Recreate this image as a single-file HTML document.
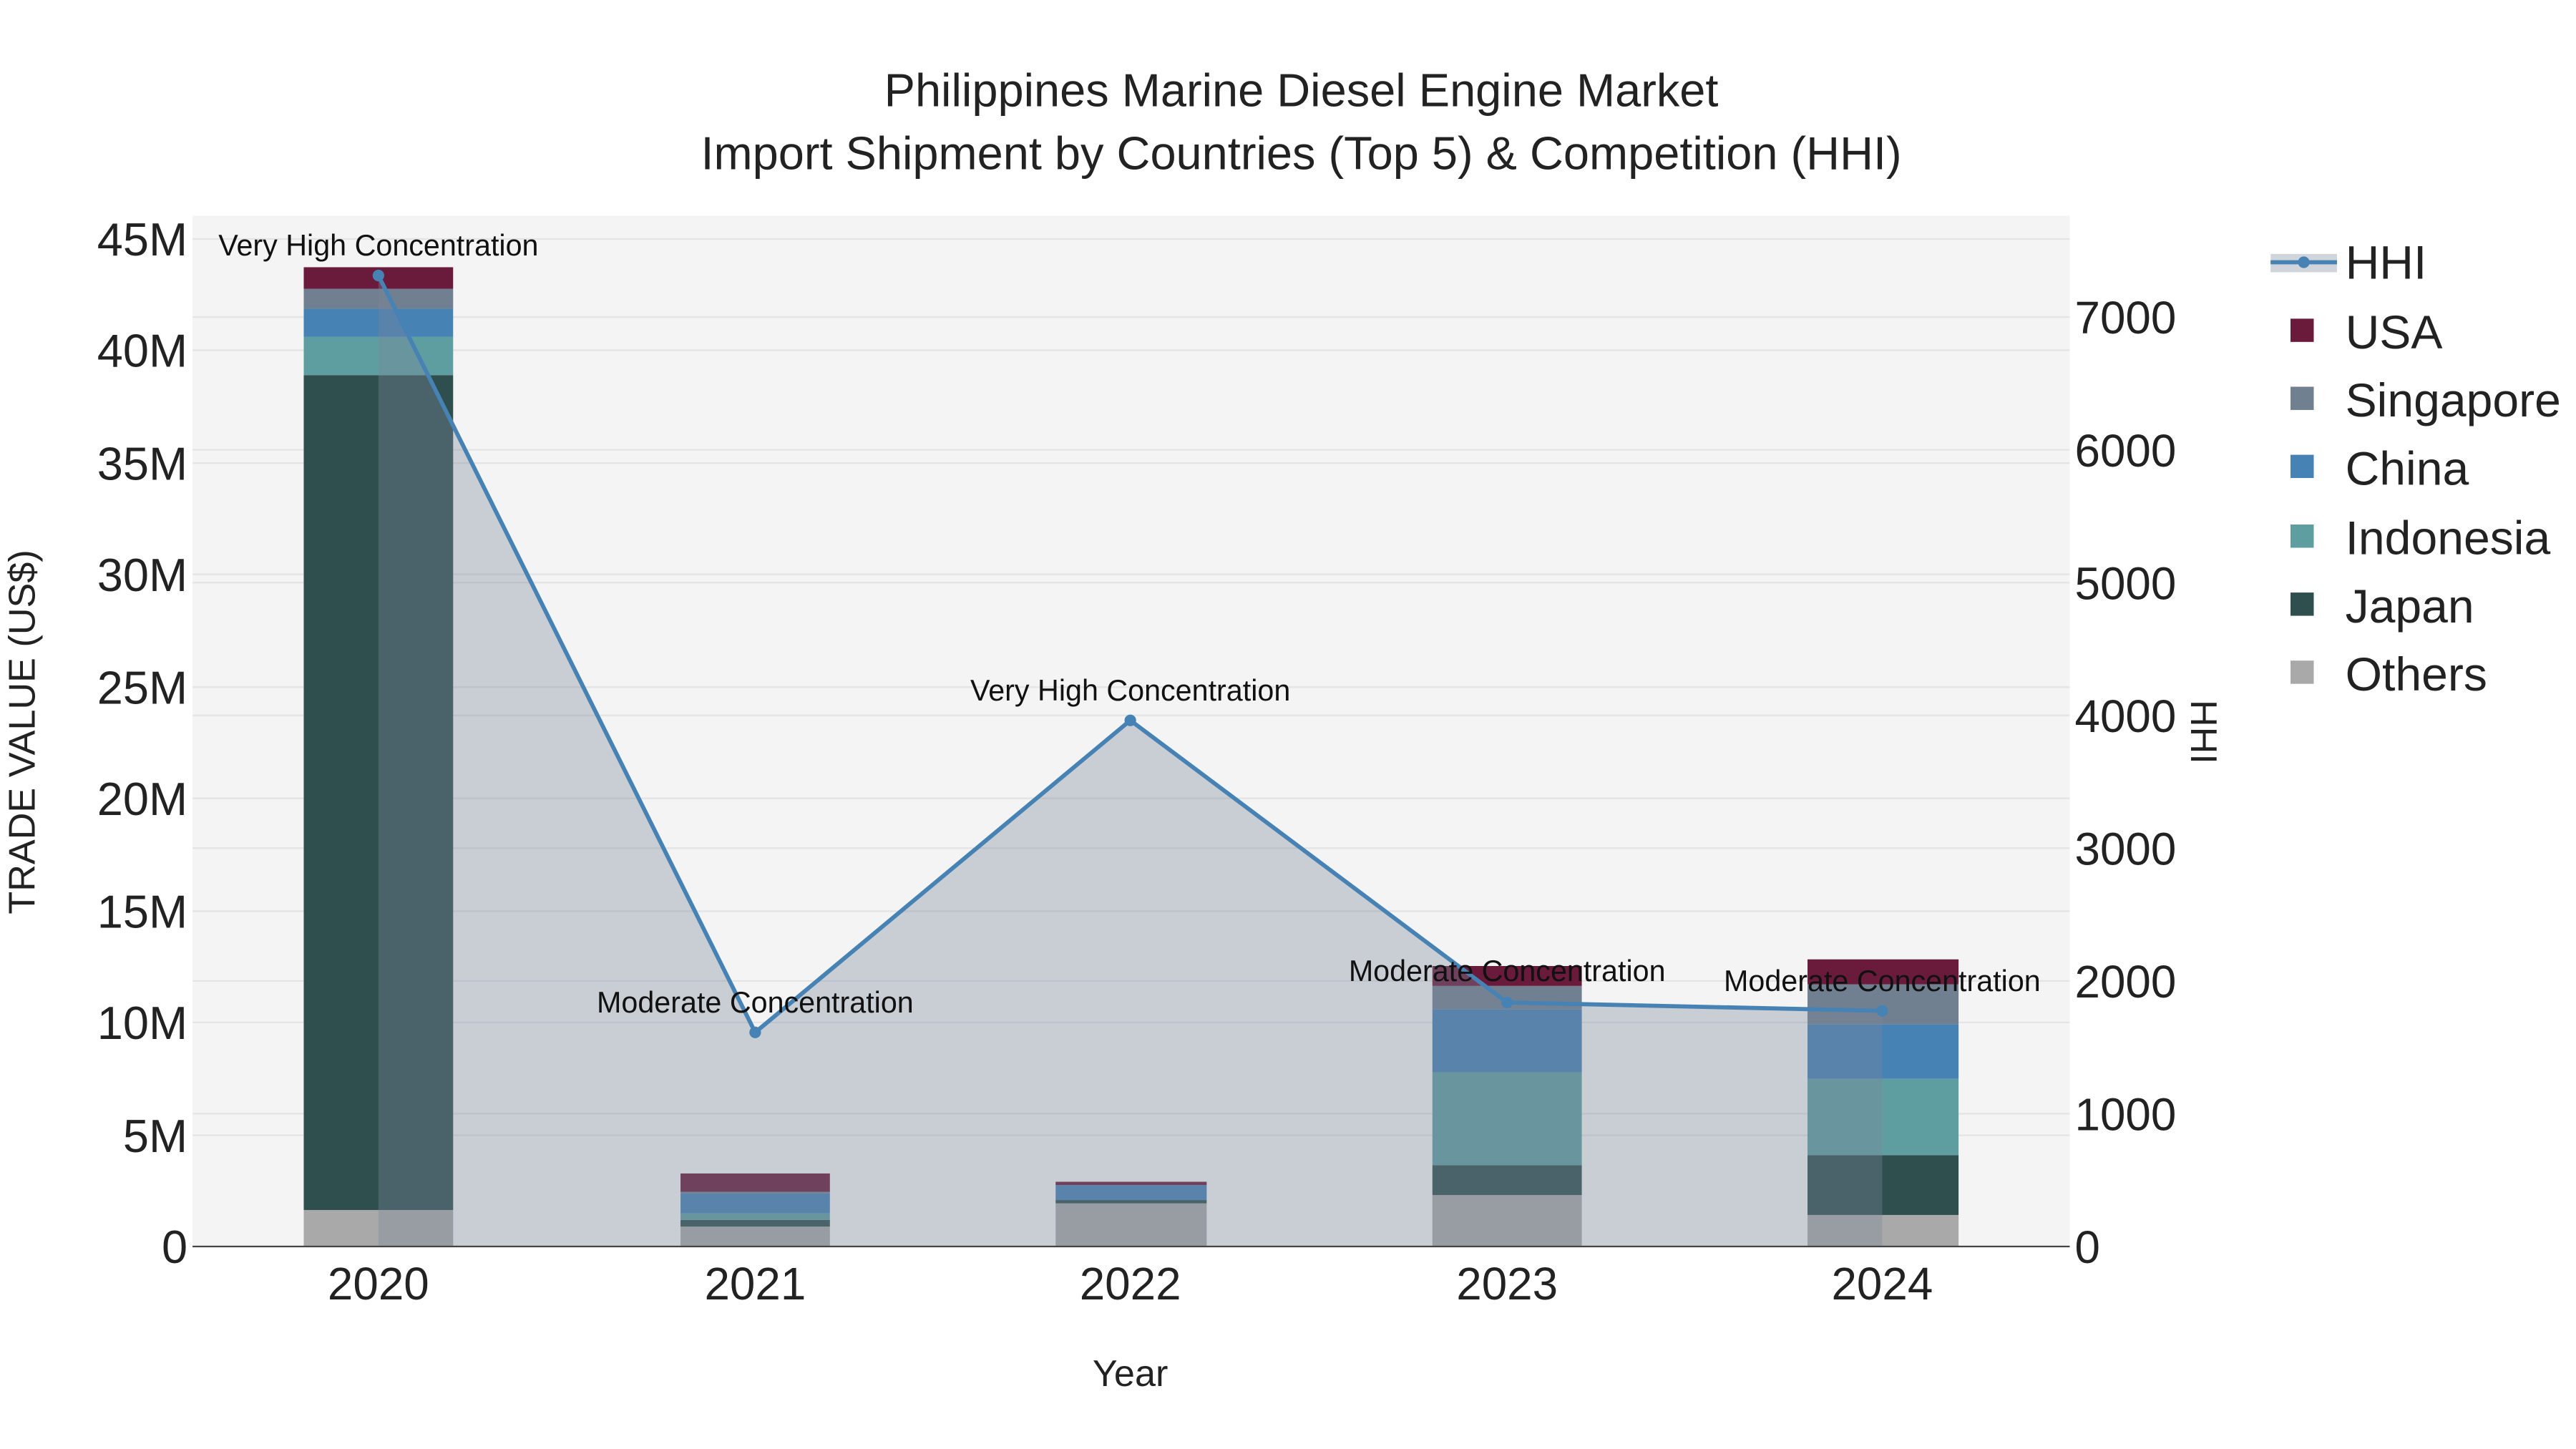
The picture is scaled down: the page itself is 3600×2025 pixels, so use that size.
<!DOCTYPE html>
<html><head><meta charset="utf-8"><style>
html,body{margin:0;padding:0;background:#fff;}
svg{display:block;}
text{font-family:"Liberation Sans",sans-serif;}
</style></head><body>
<svg width="3600" height="2025" viewBox="0 0 1552 873" xmlns="http://www.w3.org/2000/svg">
<rect width="1552" height="873" fill="#fff"/>
<rect x="116" y="130" width="1131" height="621" fill="#f4f4f4"/>
<g stroke="#e4e4e4" stroke-width="1">
<line x1="116" x2="1247" y1="144" y2="144"/><line x1="116" x2="1247" y1="211" y2="211"/><line x1="116" x2="1247" y1="279" y2="279"/><line x1="116" x2="1247" y1="346" y2="346"/><line x1="116" x2="1247" y1="414" y2="414"/><line x1="116" x2="1247" y1="481" y2="481"/><line x1="116" x2="1247" y1="549" y2="549"/><line x1="116" x2="1247" y1="616" y2="616"/><line x1="116" x2="1247" y1="684" y2="684"/>
<line x1="116" x2="1247" y1="191" y2="191"/><line x1="116" x2="1247" y1="271" y2="271"/><line x1="116" x2="1247" y1="351" y2="351"/><line x1="116" x2="1247" y1="431" y2="431"/><line x1="116" x2="1247" y1="511" y2="511"/><line x1="116" x2="1247" y1="591" y2="591"/><line x1="116" x2="1247" y1="671" y2="671"/>
</g>
<g>
<rect x="183" y="729" width="90" height="22" fill="#a9a9a9"/>
<rect x="183" y="226" width="90" height="503" fill="#2f4f4f"/>
<rect x="183" y="203" width="90" height="23" fill="#5f9ea0"/>
<rect x="183" y="186" width="90" height="17" fill="#4682b4"/>
<rect x="183" y="174" width="90" height="12" fill="#708090"/>
<rect x="183" y="161" width="90" height="13" fill="#6a1b3c"/>

<rect x="410" y="739" width="90" height="12" fill="#a9a9a9"/>
<rect x="410" y="735" width="90" height="4" fill="#2f4f4f"/>
<rect x="410" y="731" width="90" height="4" fill="#5f9ea0"/>
<rect x="410" y="719" width="90" height="12" fill="#4682b4"/>
<rect x="410" y="718" width="90" height="1" fill="#708090"/>
<rect x="410" y="707" width="90" height="11" fill="#6a1b3c"/>

<rect x="636" y="725" width="91" height="26" fill="#a9a9a9"/>
<rect x="636" y="723" width="91" height="2" fill="#2f4f4f"/>
<rect x="636" y="714" width="91" height="9" fill="#4682b4"/>
<rect x="636" y="712" width="91" height="2" fill="#6a1b3c"/>

<rect x="863" y="720" width="90" height="31" fill="#a9a9a9"/>
<rect x="863" y="702" width="90" height="18" fill="#2f4f4f"/>
<rect x="863" y="646" width="90" height="56" fill="#5f9ea0"/>
<rect x="863" y="608" width="90" height="38" fill="#4682b4"/>
<rect x="863" y="594" width="90" height="14" fill="#708090"/>
<rect x="863" y="582" width="90" height="12" fill="#6a1b3c"/>

<rect x="1089" y="732" width="91" height="19" fill="#a9a9a9"/>
<rect x="1089" y="696" width="91" height="36" fill="#2f4f4f"/>
<rect x="1089" y="650" width="91" height="46" fill="#5f9ea0"/>
<rect x="1089" y="617" width="91" height="33" fill="#4682b4"/>
<rect x="1089" y="593" width="91" height="24" fill="#708090"/>
<rect x="1089" y="578" width="91" height="15" fill="#6a1b3c"/>
</g>
<path d="M228,166 L455,622 L681,434 L908,604 L1134,609 L1134,751 L228,751 Z" fill="rgb(123,134,154)" fill-opacity="0.355"/>
<polyline points="228,166 455,622 681,434 908,604 1134,609" fill="none" stroke="#4682b4" stroke-width="2.5"/>
<g fill="#4682b4"><circle cx="228" cy="166" r="3.5"/><circle cx="455" cy="622" r="3.5"/><circle cx="681" cy="434" r="3.5"/><circle cx="908" cy="604" r="3.5"/><circle cx="1134" cy="609" r="3.5"/></g>
<line x1="116" x2="1247" y1="751" y2="751" stroke="#444" stroke-width="1"/>
<g font-size="17.8" fill="#111" text-anchor="middle">
<text x="228" y="154">Very High Concentration</text>
<text x="455" y="610">Moderate Concentration</text>
<text x="681" y="422">Very High Concentration</text>
<text x="908" y="591">Moderate Concentration</text>
<text x="1134" y="597">Moderate Concentration</text>
</g>
<g font-size="28" fill="#222" text-anchor="middle">
<text x="784" y="64">Philippines Marine Diesel Engine Market</text>
<text x="784" y="102">Import Shipment by Countries (Top 5) &amp; Competition (HHI)</text>
</g>
<g font-size="28" fill="#222" text-anchor="end">
<text x="113" y="761">0</text><text x="113" y="694">5M</text><text x="113" y="626">10M</text><text x="113" y="559">15M</text><text x="113" y="491">20M</text><text x="113" y="424">25M</text><text x="113" y="356">30M</text><text x="113" y="289">35M</text><text x="113" y="221">40M</text><text x="113" y="154">45M</text>
</g>
<g font-size="27.5" fill="#222" text-anchor="start">
<text x="1250" y="761">0</text><text x="1250" y="681">1000</text><text x="1250" y="601">2000</text><text x="1250" y="521">3000</text><text x="1250" y="441">4000</text><text x="1250" y="361">5000</text><text x="1250" y="281">6000</text><text x="1250" y="201">7000</text>
</g>
<g font-size="27.5" fill="#222" text-anchor="middle">
<text x="228" y="783">2020</text><text x="455" y="783">2021</text><text x="681" y="783">2022</text><text x="908" y="783">2023</text><text x="1134" y="783">2024</text>
</g>
<text x="681" y="835" font-size="22.5" fill="#222" text-anchor="middle">Year</text>
<text transform="translate(21,441) rotate(-90)" font-size="22.5" fill="#222" text-anchor="middle">TRADE VALUE (US$)</text>
<text transform="translate(1320,441) rotate(90)" font-size="22.5" fill="#222" text-anchor="middle">HHI</text>
<rect x="1368" y="153" width="40" height="11" fill="rgb(123,134,154)" fill-opacity="0.355"/>
<line x1="1368" x2="1408" y1="158" y2="158" stroke="#4682b4" stroke-width="2.5"/>
<circle cx="1388" cy="158" r="3.5" fill="#4682b4"/>
<rect x="1380" y="192" width="14" height="14" fill="#6a1b3c"/>
<rect x="1380" y="233" width="14" height="14" fill="#708090"/>
<rect x="1380" y="274" width="14" height="14" fill="#4682b4"/>
<rect x="1380" y="316" width="14" height="14" fill="#5f9ea0"/>
<rect x="1380" y="357" width="14" height="14" fill="#2f4f4f"/>
<rect x="1380" y="398" width="14" height="14" fill="#a9a9a9"/>
<g font-size="28.5" fill="#222">
<text x="1413" y="168">HHI</text><text x="1413" y="210">USA</text><text x="1413" y="251">Singapore</text><text x="1413" y="292">China</text><text x="1413" y="334">Indonesia</text><text x="1413" y="375">Japan</text><text x="1413" y="416">Others</text>
</g>
</svg>
</body></html>
